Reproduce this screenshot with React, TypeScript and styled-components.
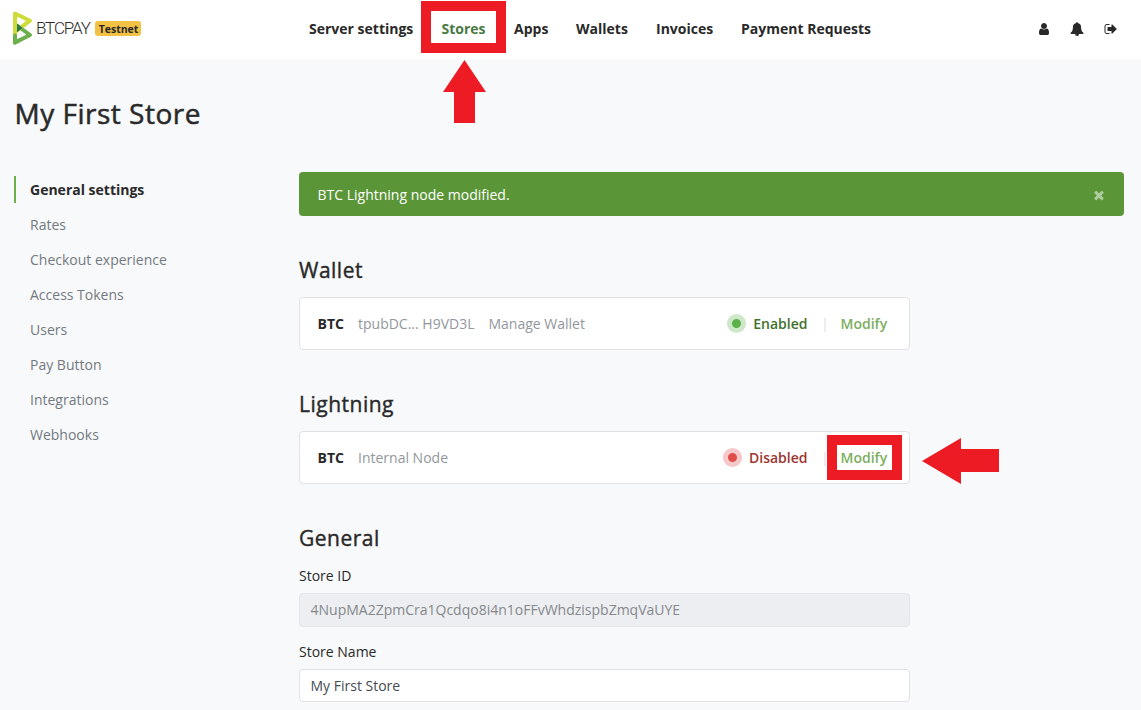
import React from "react";
import styled, { createGlobalStyle } from "styled-components";

const GlobalStyle = createGlobalStyle`
  *, *::before, *::after { box-sizing: border-box; }
  body {
    margin: 0;
    background: #f8f9fb;
    color: #292929;
    font: 400 14px/21px "Open Sans", "Noto Sans", sans-serif;
    overflow: hidden;
  }
`;

const Page = styled.div`
  position: relative;
  width: 1141px;
  height: 710px;
  overflow: hidden;
`;

const Header = styled.header`
  display: flex;
  align-items: center;
  height: 59px;
  padding: 0 23px 2px 12px;
  background: #fff;
`;

const Brand = styled.div`
  display: flex;
  align-items: center;
  width: 297px;
`;

const Badge = styled.span`
  width: 46px;
  height: 15px;
  margin-left: 3px;
  padding-left: 1px;
  border-radius: 3px;
  background: #f3c143;
  font-size: 10.5px;
  font-weight: 700;
  line-height: 17px;
  text-align: center;
`;

const Nav = styled.nav`
  display: flex;
  gap: 28px;
`;

const NavLink = styled.a<{ $w: number; $active?: boolean }>`
  width: ${(p) => p.$w}px;
  color: ${(p) => (p.$active ? "#4a7a43" : "#292929")};
  font-weight: 700;
  white-space: nowrap;
`;

const Actions = styled.div`
  display: flex;
  gap: 19px;
  margin-left: auto;

  > :last-child { margin-left: 1px; }
`;

const Icon = styled.svg`
  display: block;
  width: 14px;
  height: 14px;
  fill: currentColor;
`;

const Title = styled.h1`
  margin: 0;
  padding: 36px 0 1px 14.5px;
  font-size: 28px;
  font-weight: 500;
  letter-spacing: 0.5px;
  line-height: 36px;
  -webkit-text-stroke: 0.5px currentColor;
`;

const Body = styled.div`
  display: flex;
  padding: 40px 17px 0 14px;
`;

const Side = styled.nav`
  display: flex;
  flex-direction: column;
  gap: 8px;
  width: 285px;
  padding-top: 4px;
`;

const SideLink = styled.a<{ $active?: boolean }>`
  height: 27px;
  padding-left: 14px;
  border-left: 2px solid ${(p) => (p.$active ? "#6cb04c" : "transparent")};
  color: ${(p) => (p.$active ? "#292929" : "#737980")};
  font-weight: ${(p) => (p.$active ? 700 : 400)};
  line-height: 27px;
`;

const Main = styled.main`
  flex: 1;
`;

const Alert = styled.div`
  display: flex;
  align-items: center;
  justify-content: space-between;
  height: 44px;
  padding: 1px 18px 0 18.5px;
  border-radius: 4px;
  background: #5a9537;
  color: #fff;
`;

const Dismiss = styled.span`
  color: #b0cfa0;
`;

const Column = styled.div`
  width: 611px;
`;

const Heading = styled.h2`
  margin: 0;
  padding-top: 40px;
  height: 81px;
  font-size: 21px;
  font-weight: 500;
  letter-spacing: 0.5px;
  line-height: 28px;
  -webkit-text-stroke: 0.4px currentColor;
`;

const MethodRow = styled.div`
  display: flex;
  align-items: center;
  height: 53px;
  padding: 0 21.5px 0 17.5px;
  border: 1px solid #dfe2e7;
  border-radius: 4px;
  background: #fff;
`;

const Code = styled.strong`
  width: 40.5px;
  font-weight: 700;
`;

const Muted = styled.span`
  margin-right: 14px;
  color: #92979c;
`;

const Status = styled.span<{ $on: boolean }>`
  display: flex;
  align-items: center;
  margin-left: auto;
  color: ${(p) => (p.$on ? "#3f722b" : "#9c3530")};
  font-weight: 600;
`;

const Dot = styled.span<{ $on: boolean }>`
  width: 19px;
  height: 19px;
  margin-right: 7px;
  border: 5px solid ${(p) => (p.$on ? "#cde7c8" : "#f6c8c9")};
  border-radius: 50%;
  background: ${(p) => (p.$on ? "#59b148" : "#e04d49")};
`;

const Divider = styled.span`
  width: 2px;
  height: 14px;
  margin: 2px 14.5px 0 16.5px;
  background: #ebedf0;
`;

const Modify = styled.a`
  width: 47px;
  color: #7cae60;
  font-weight: 600;
`;

const Label = styled.label`
  display: block;
  height: 28px;
`;

const Input = styled.div<{ $disabled?: boolean }>`
  height: ${(p) => (p.$disabled ? 34 : 33)}px;
  margin-bottom: 14px;
  padding: 0 10.5px;
  border: 1px solid ${(p) => (p.$disabled ? "#e3e5e9" : "#dfe2e7")};
  border-radius: 4px;
  background: ${(p) => (p.$disabled ? "#edeef1" : "#fff")};
  color: ${(p) => (p.$disabled ? "#85888c" : "#454b53")};
  line-height: 32px;
`;

const Highlight = styled.div<{ $x: number; $y: number; $w: number; $h: number }>`
  position: absolute;
  left: ${(p) => p.$x}px;
  top: ${(p) => p.$y}px;
  width: ${(p) => p.$w}px;
  height: ${(p) => p.$h}px;
  border: 10px solid #ed1c24;
`;

const Arrow = styled.svg<{ $x: number; $y: number }>`
  position: absolute;
  left: ${(p) => p.$x}px;
  top: ${(p) => p.$y}px;
  fill: #ed1c24;
`;

const icons = {
  user: "M1536 1399q0 109-62.5 187t-150.5 78h-854q-88 0-150.5-78t-62.5-187q0-85 8.5-160.5t31.5-152 58.5-131 94-89 134.5-34.5q131 128 313 128t313-128q76 0 134.5 34.5t94 89 58.5 131 31.5 152 8.5 160.5zm-256-887q0 159-112.5 271.5t-271.5 112.5-271.5-112.5-112.5-271.5 112.5-271.5 271.5-112.5 271.5 112.5 112.5 271.5z",
  bell: "M912 1696q0-16-16-16-59 0-101.5-42.5t-42.5-101.5q0-16-16-16t-16 16q0 73 51.5 124.5t124.5 51.5q16 0 16-16zm816-288q0 52-38 90t-90 38h-448q0 106-75 181t-181 75-181-75-75-181h-448q-52 0-90-38t-38-90q50-42 91-88t85-119.5 74.5-158.5 50-206 19.5-260q0-152 117-282.5t307-158.5q-8-19-8-39 0-40 28-68t68-28 68 28 28 68q0 20-8 39 190 28 307 158.5t117 282.5q0 139 19.5 260t50 206 74.5 158.5 85 119.5 91 88z",
  signOut: "M704 1440q0 4 1 20t.5 26.5-3 23.5-10 19.5-20.5 6.5h-320q-119 0-203.5-84.5t-84.5-203.5v-704q0-119 84.5-203.5t203.5-84.5h320q13 0 22.5 9.5t9.5 22.5q0 4 1 20t.5 26.5-3 23.5-10 19.5-20.5 6.5h-320q-66 0-113 47t-47 113v704q0 66 47 113t113 47h312l11.5 1 11.5 3 8 5.5 7 9 2 13.5zm928-544q0 26-19 45l-544 544q-19 19-45 19t-45-19-19-45v-288h-448q-26 0-45-19t-19-45v-384q0-26 19-45t45-19h448v-288q0-26 19-45t45-19 45 19l544 544q19 19 19 45z",
  close: "M1490 1322q0 40-28 68l-136 136q-28 28-68 28t-68-28l-294-294-294 294q-28 28-68 28t-68-28l-136-136q-28-28-28-68t28-68l294-294-294-294q-28-28-28-68t28-68l136-136q28-28 68-28t68 28l294 294 294-294q28-28 68-28t68 28l136 136q28 28 28 68t-28 68l-294 294 294 294q28 28 28 68z",
};

const Glyph = ({ name }: { name: keyof typeof icons }) => (
  <Icon viewBox="0 0 1792 1792">
    <path d={icons[name]} />
  </Icon>
);

const Logo = () => (
  <svg width="80" height="36" viewBox="0 0 80 36">
    <g fill="none" strokeWidth="4" strokeLinecap="round" strokeLinejoin="round">
      <path d="M3 31.5 L18 24 L5 14.5" stroke="#6cb04c" />
      <path d="M3 29 V2.5 L18 9.7 L5 19.3" stroke="#cedc3a" />
      <path d="M3 24.5 V31.5 L8 29" stroke="#6cb04c" />
    </g>
    <path d="M5 12.8 L11 17 L5 21.2 Z" fill="#2f7a4c" />
    <text
      x="24"
      y="23"
      fontFamily="Roboto, sans-serif"
      fontSize="17"
      fontWeight="300"
      textLength="55"
      lengthAdjust="spacing"
      fill="#292929"
    >
      BTCPAY
    </text>
  </svg>
);

const navItems: [string, number][] = [
  ["Server settings", 104.5],
  ["Stores", 44.5],
  ["Apps", 34],
  ["Wallets", 52],
  ["Invoices", 57],
  ["Payment Requests", 130],
];

const sideItems = [
  "General settings",
  "Rates",
  "Checkout experience",
  "Access Tokens",
  "Users",
  "Pay Button",
  "Integrations",
  "Webhooks",
];

const Method = ({ on, details }: { on: boolean; details: string[] }) => (
  <MethodRow>
    <Code>BTC</Code>
    {details.map((d) => (
      <Muted key={d}>{d}</Muted>
    ))}
    <Status $on={on}>
      <Dot $on={on} />
      {on ? "Enabled" : "Disabled"}
    </Status>
    <Divider />
    <Modify>Modify</Modify>
  </MethodRow>
);

export default function App() {
  return (
    <Page>
      <GlobalStyle />
      <Header>
        <Brand>
          <Logo />
          <Badge>Testnet</Badge>
        </Brand>
        <Nav>
          {navItems.map(([label, w]) => (
            <NavLink key={label} $w={w} $active={label === "Stores"}>
              {label}
            </NavLink>
          ))}
        </Nav>
        <Actions>
          <Glyph name="user" />
          <Glyph name="bell" />
          <Glyph name="signOut" />
        </Actions>
      </Header>
      <Title>My First Store</Title>
      <Body>
        <Side>
          {sideItems.map((label, i) => (
            <SideLink key={label} $active={i === 0}>
              {label}
            </SideLink>
          ))}
        </Side>
        <Main>
          <Alert>
            BTC Lightning node modified.
            <Dismiss>
              <Glyph name="close" />
            </Dismiss>
          </Alert>
          <Column>
            <Heading>Wallet</Heading>
            <Method on details={["tpubDC... H9VD3L", "Manage Wallet"]} />
            <Heading>Lightning</Heading>
            <Method on={false} details={["Internal Node"]} />
            <Heading>General</Heading>
            <Label>Store ID</Label>
            <Input $disabled>4NupMA2ZpmCra1Qcdqo8i4n1oFFvWhdzispbZmqVaUYE</Input>
            <Label>Store Name</Label>
            <Input>My First Store</Input>
          </Column>
        </Main>
      </Body>
      <Highlight $x={421} $y={1} $w={85} $h={52} />
      <Arrow $x={443} $y={60} width="43" height="63">
        <path d="M21.5 0 L43 32 H32 V63 H11 V32 H0 Z" />
      </Arrow>
      <Highlight $x={827} $y={435} $w={75} $h={45} />
      <Arrow $x={922} $y={438} width="77" height="46">
        <path d="M0 23 L39 0 V11 H77 V34 H39 V46 Z" />
      </Arrow>
    </Page>
  );
}
